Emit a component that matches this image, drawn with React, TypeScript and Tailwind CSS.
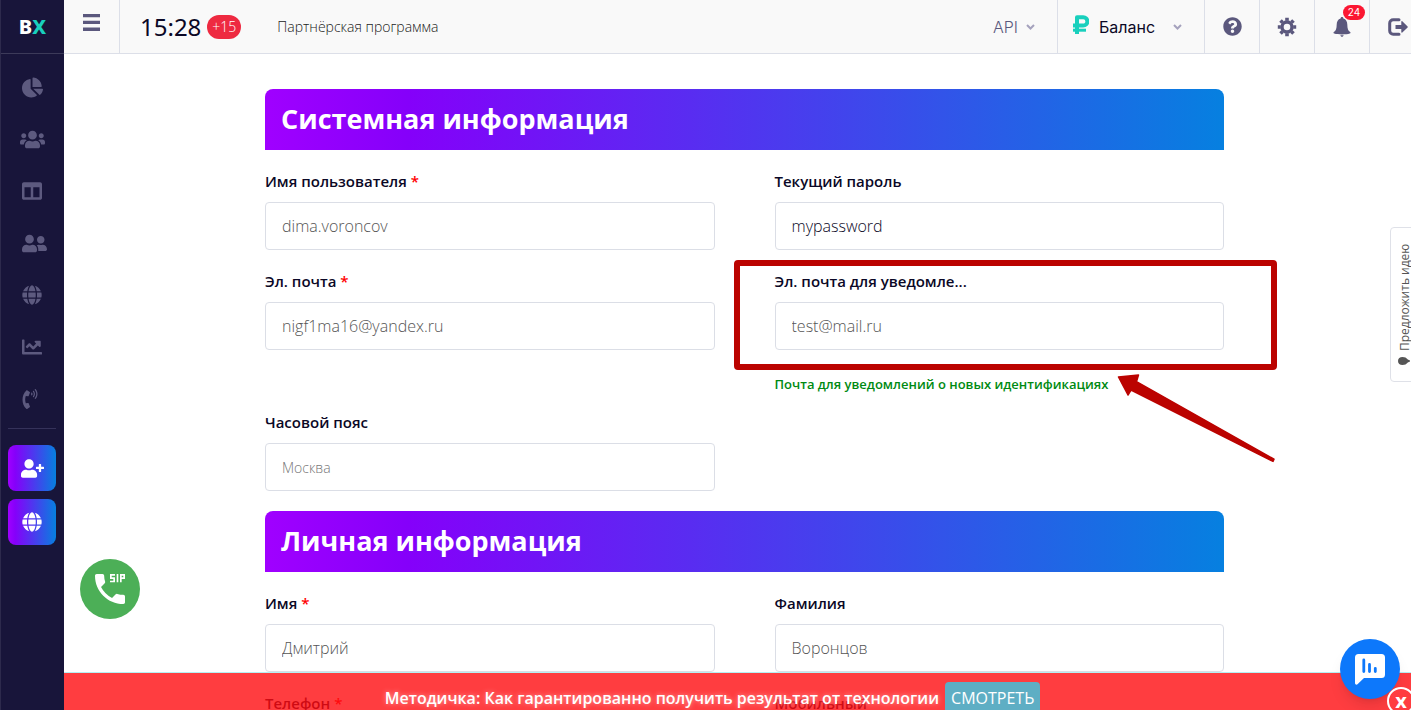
import { JSX, ReactNode, useId } from "react";
import { FaChartLine, FaChartPie, FaColumns, FaGlobe, FaPhoneVolume, FaQuestionCircle, FaUserFriends, FaUserPlus, FaUsers } from "react-icons/fa";
import { MdDialerSip } from "react-icons/md";

const GearIcon = (): JSX.Element => (
    <svg viewBox="0 0 20 20" className="size-5" fill="none" stroke="currentColor">
        <circle cx="10" cy="10" r="5" strokeWidth="3.4" />
        <path d="M10 .8v3M10 16.2v3M.8 10h3M16.2 10h3M3.5 3.5l2.1 2.1M14.4 14.4l2.1 2.1M3.5 16.5l2.1-2.1M14.4 5.6l2.1-2.1" strokeWidth="3.6" />
    </svg>
);

const BellIcon = (): JSX.Element => (
    <svg viewBox="0 0 18 20" className="h-5 w-[18px]" fill="currentColor">
        <path d="M9 0c.9 0 1.4.6 1.4 1.5C13 2.2 14.300 4.500 14.300 7.500c0 4.300.9 6.200 2.900 7.600.6.5.4 1.200-.4 1.500-2 .6-4.500.9-7.800.9s-5.800-.3-7.800-.9c-.8-.3-1-1-.4-1.500 2-1.400 2.900-3.300 2.900-7.600 0-3 1.300-5.300 3.900-6C7.600.6 8.100 0 9 0z" />
        <path d="M7.300 18.200h3.400c-.2.900-.8 1.500-1.700 1.500s-1.500-.6-1.700-1.500z" />
    </svg>
);

const SignOutIcon = (): JSX.Element => (
    <svg viewBox="0 0 20 18" className="h-[18px] w-5 shrink-0" fill="currentColor">
        <path d="M11 1.700H5.200A3.500 3.500 0 0 0 1.700 5.200v7.600a3.500 3.500 0 0 0 3.500 3.500H11" fill="none" stroke="currentColor" strokeWidth="3" strokeLinecap="round" />
        <path d="M7.500 7h5.800V3.700c0-.6.6-.8 1-.4l5.300 5.100c.3.300.3.700 0 1l-5.300 5.100c-.4.4-1 .2-1-.4V11H7.500z" />
    </svg>
);

const RubleIcon = (): JSX.Element => (
    <svg viewBox="0 0 16 19" className="h-[19px] w-4" fill="none" stroke="currentColor" strokeLinejoin="round">
        <path d="M4 19V2.200h6.200a3.800 3.800 0 0 1 0 8.400H0" strokeWidth="4" />
        <path d="M0 15.200h13" strokeWidth="3" />
    </svg>
);

const Chevron = (): JSX.Element => (
    <svg viewBox="0 0 9 6" className="h-1.5 w-[9px] text-[#a5a2bd]" fill="none" stroke="currentColor" strokeWidth="2">
        <path d="M1 1l3.500 3.500L8 1" />
    </svg>
);

const navItems = [
    { label: "Статистика", icon: <FaChartPie size={21} /> },
    { label: "Клиенты", icon: <FaUsers size={25} className="-mx-0.5" /> },
    { label: "Таблицы", icon: <FaColumns size={20} /> },
    { label: "Контакты", icon: <FaUserFriends size={25} /> },
    { label: "Сайты", icon: <FaGlobe size={20} /> },
    { label: "Графики", icon: <FaChartLine size={20} /> },
    { label: "Звонки", icon: <FaPhoneVolume size={20} className="-mx-0.5" /> },
];

const Sidebar = (): JSX.Element => (
    <aside className="relative z-20 flex w-16 shrink-0 flex-col border-l border-[#2d2a4c] bg-[#18153a]">
        <a href="#" className="flex h-[54px] items-center justify-center border-b border-[#3c3a59] font-['Noto_Sans',sans-serif] text-xl font-extrabold text-white">
            B<span className="text-[#19d0bd]">X</span>
        </a>
        <nav className="flex flex-col pb-[3px] pt-[7px]">
            {navItems.map(({ label, icon }) => (
                <a key={label} href="#" aria-label={label} className="flex h-[52px] items-center pl-[21px] text-[#5d5a7f]">{icon}</a>
            ))}
        </nav>
        <div className="mx-2 ml-[7px] flex flex-col gap-2 border-t border-[#35325a] pt-4">
            <button aria-label="Добавить" className="flex h-[46px] items-center justify-center rounded-lg bg-[linear-gradient(90deg,#a000ff,#8500fa_15%,#0680e0)] text-white"><FaUserPlus size={23} /></button>
            <button aria-label="Сайт" className="flex h-[46px] items-center justify-center rounded-lg bg-[linear-gradient(90deg,#a000ff,#8500fa_15%,#0680e0)] text-white"><FaGlobe size={20} /></button>
        </div>
    </aside>
);

const Header = (): JSX.Element => (
    <header className="flex h-[54px] shrink-0 border-b border-[#dcdfe8] bg-[#f9f9f9] text-[#5b587d]">
        <button aria-label="Меню" className="flex w-14 items-center justify-center border-r border-[#dcdfe8] pb-2">
            <svg viewBox="0 0 17 17" className="size-[17px]" fill="currentColor">
                <path d="M0 0h17v3.300H0zM0 6.800h17v3.300H0zM0 13.600h17v3.300H0z" />
            </svg>
        </button>
        <div className="flex items-center pl-5">
            <span className="font-['Noto_Sans',sans-serif] text-2xl text-[#0b0826]">15:28</span>
            <span className="ml-1.5 flex h-6 w-[34px] items-center justify-center rounded-full bg-[#ee2a41] text-sm font-light text-white">+15</span>
            <a href="#" className="ml-9 text-sm font-light text-[#222]">Партнёрская программа</a>
        </div>
        <div className="ml-auto flex font-['Inter',sans-serif]">
            <button className="flex items-center gap-2 pr-[22px] font-light">API <Chevron /></button>
            <button className="flex w-[147px] items-center border-l border-[#dcdfe8] pl-[15px] text-[#0b0826]">
                <span className="pb-1 text-[#19d0bd]"><RubleIcon /></span>
                <span className="ml-2.5 mr-[18px]">Баланс</span>
                <Chevron />
            </button>
            <button aria-label="Помощь" className="flex w-[55px] items-center justify-center border-l border-[#dcdfe8]"><FaQuestionCircle size={19} /></button>
            <button aria-label="Настройки" className="flex w-[55px] items-center justify-center border-l border-[#dcdfe8]"><GearIcon /></button>
            <button aria-label="Уведомления" className="relative flex w-[55px] items-center justify-center border-l border-[#dcdfe8]">
                <BellIcon />
                <span className="absolute right-1 top-[5px] flex h-[15px] w-[22px] items-center justify-center rounded-full bg-[#fb1732] text-[10px] text-white">24</span>
            </button>
            <button aria-label="Выход" className="flex w-14 items-center justify-center border-l border-[#dcdfe8]"><SignOutIcon /></button>
        </div>
    </header>
);

type FieldProps = {
    label: string,
    value?: string,
    required?: boolean,
    inputClass?: string,
    children?: ReactNode
}

const Field = ({ label, value, required, inputClass = "text-base text-[#555]", children }: FieldProps): JSX.Element => {
    const id = useId();
    return (
        <div className="relative flex flex-col">
            <label htmlFor={id} className="mb-2.5 text-[15px] font-semibold leading-[22px] text-[#0b0826]">
                {label}{required && <span className="text-[#f00]"> *</span>}
            </label>
            <input id={id} defaultValue={value} className={`h-12 w-full rounded border border-[#dbdee6] bg-white px-4 font-light outline-none ${inputClass}`} />
            {children}
        </div>
    );
};

const Section = ({ title, children }: { title: string, children: ReactNode }): JSX.Element => (
    <section className="flex flex-col gap-5">
        <h2 className="flex h-[61px] items-center rounded-t-lg bg-[linear-gradient(90deg,#a000ff,#8500fa_15%,#0680e0)] px-4 text-[27px] font-bold text-white">{title}</h2>
        <div className="grid grid-cols-2 gap-x-[60px] gap-y-5">{children}</div>
    </section>
);

const Highlight = (): JSX.Element => (
    <>
        <div className="pointer-events-none absolute -left-[41px] -right-[53px] -top-2.5 h-[110px] rounded border-6 border-[#bb0300]" />
        <svg viewBox="0 0 162 92" className="pointer-events-none absolute left-[340px] top-[103px] h-[92px] w-[162px]">
            <path d="M3.500 4 23.500 2 21.500 8.600 159 86.200 158 88.400 16 17 13 22z" fill="#bb0300" stroke="#bb0300" strokeWidth="1.500" strokeLinejoin="round" />
        </svg>
    </>
);

const App = (): JSX.Element => {
    return (
        <div className="relative flex h-screen overflow-hidden bg-white font-['Open_Sans',sans-serif]">
            <Sidebar />
            <div className="-mr-3.5 flex min-w-0 grow flex-col">
                <Header />
                <main className="mx-auto flex w-full max-w-[959px] flex-col gap-5 pt-[35px]">
                    <Section title="Системная информация">
                        <Field label="Имя пользователя" value="dima.voroncov" required />
                        <Field label="Текущий пароль" value="mypassword" inputClass="text-base text-[#0b0826]" />
                        <Field label="Эл. почта" value="nigf1ma16@yandex.ru" required />
                        <Field label="Эл. почта для уведомле..." value="test@mail.ru">
                            <p className="-mb-1 mt-6 text-[13px] font-semibold leading-[21px] text-[#008a12]">Почта для уведомлений о новых идентификациях</p>
                            <Highlight />
                        </Field>
                        <Field label="Часовой пояс" value="Москва" inputClass="text-sm text-[#777]" />
                    </Section>
                    <Section title="Личная информация">
                        <Field label="Имя" value="Дмитрий" required />
                        <Field label="Фамилия" value="Воронцов" />
                        <Field label="Телефон" required />
                        <Field label="Мобильный" />
                    </Section>
                </main>
            </div>

            <button className="absolute -right-2 top-[227px] flex h-[155px] w-[29px] rotate-180 items-center justify-center gap-1.5 rounded-r border border-[#dfe1e8] bg-white text-xs font-medium text-[#555] [writing-mode:vertical-rl]">
                <svg viewBox="0 0 12 8" className="h-2 w-3" fill="#555">
                    <path d="M0 3.500 2.200 2.500C3.500.8 5.300 0 7.500 0 10.200 0 12 1.600 12 4s-1.800 4-4.500 4C5.300 8 3.500 7.200 2.200 5.500L0 4.500z" />
                </svg>
                Предложить идею
            </button>
            <button aria-label="SIP" className="absolute bottom-[91px] left-20 flex size-[60px] items-center justify-center rounded-full bg-[#4caf57] text-white"><MdDialerSip size={40} /></button>

            <div className="absolute inset-x-0 bottom-0 z-10 -mr-3.5 flex h-[38px] items-start justify-center gap-1.5 border-t border-[#b5f0f3] bg-[#ff0c10]/80 pt-[9px] text-white">
                <span className="text-base font-semibold leading-8 [text-shadow:0_0_5px_rgba(255,255,255,0.5)]">Методичка: Как гарантированно получить результат от технологии</span>
                <a href="#" className="rounded-sm bg-[#5eaec4] px-1.5 text-base leading-8">СМОТРЕТЬ</a>
            </div>
            <button aria-label="Чат" className="absolute bottom-[11px] right-[11px] z-10 flex size-[60px] items-center justify-center rounded-full bg-[#0d78fb] shadow-lg">
                <svg viewBox="0 0 30 31" className="h-[31px] w-[30px]">
                    <path d="M3.500 0h23A3.500 3.500 0 0 1 30 3.500v17a3.500 3.500 0 0 1-3.500 3.500H9l-6.500 6.300C1.500 31.100 0 30.500 0 29V3.500A3.500 3.500 0 0 1 3.500 0z" fill="#fff" />
                    <path d="M8.800 6v11.500M14.500 10.500v7M20.300 14.300v3.200" stroke="#0d78fb" strokeWidth="2.800" strokeLinecap="round" />
                </svg>
            </button>
            <button className="absolute -bottom-[5px] -right-1 z-20 flex size-7 items-center justify-center rounded-full border-2 border-white bg-[#ff3d40] text-xl font-bold text-white">x</button>
        </div>
    );
};

export default App;
